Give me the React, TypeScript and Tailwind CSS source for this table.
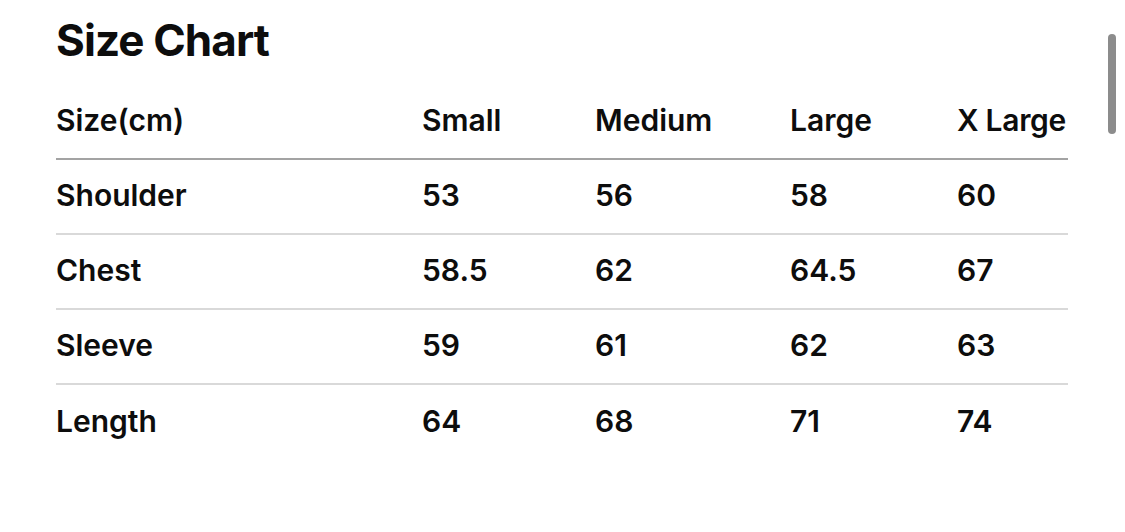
import React from "react";

const cols = "grid grid-cols-[366px_173px_195px_167px_111px]";

const rows: string[][] = [
  ["Shoulder", "53", "56", "58", "60"],
  ["Chest", "58.5", "62", "64.5", "67"],
  ["Sleeve", "59", "61", "62", "63"],
  ["Length", "64", "68", "71", "74"],
];

export default function App() {
  return (
    <div
      className="relative w-[1125px] h-[532px] bg-white text-[#0d0d0d] overflow-hidden"
      style={{ fontFamily: "Inter, 'Liberation Sans', sans-serif" }}
    >
      <div className="pl-[56px] w-[1068px]">
        <h1 className="mt-[18px] text-[44px] leading-none font-bold tracking-[-0.9px] whitespace-nowrap">
          Size Chart
        </h1>
        <div
          className={`${cols} pt-[43px] pb-[23px] border-b-[2px] border-[#a3a3a3] text-[30px] leading-none font-semibold whitespace-nowrap`}
        >
          <div>Size(cm)</div>
          <div>Small</div>
          <div>Medium</div>
          <div>Large</div>
          <div className="tracking-[-0.3px]">X Large</div>
        </div>
        {rows.map((r, i) => (
          <div
            key={r[0]}
            className={`${cols} h-[75px] pb-[4px] items-center text-[30px] leading-none font-semibold whitespace-nowrap ${
              i < rows.length - 1 ? "border-b-[2px] border-[#d9d9d9]" : ""
            }`}
          >
            {r.map((c, j) => (
              <div key={j}>{c}</div>
            ))}
          </div>
        ))}
      </div>
      <div className="absolute left-[1108px] top-[34px] w-[8px] h-[100px] rounded-full bg-[#8c8c8c]" />
    </div>
  );
}
